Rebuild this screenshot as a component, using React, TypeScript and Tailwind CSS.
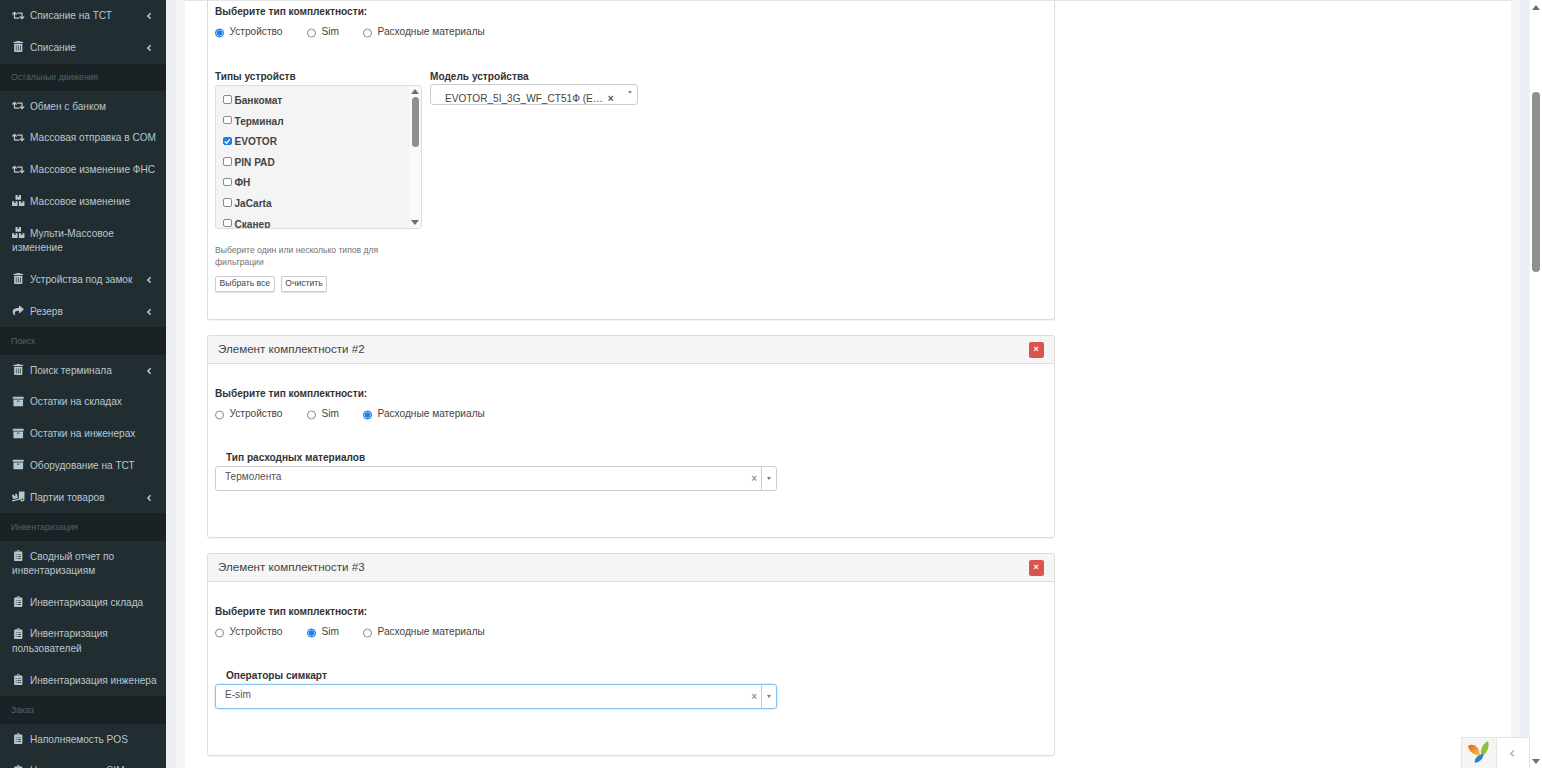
import React from "react";
import {
  FaAngleLeft,
  FaArchive,
  FaBoxes,
  FaClipboardList,
  FaRetweet,
  FaShare,
  FaTrashAlt,
  FaTruckLoading,
} from "react-icons/fa";
import type { IconType } from "react-icons";

type NavRow =
  | { heading: string }
  | { icon: IconType; label: string; arrow?: boolean; tall?: boolean };

const navRows: NavRow[] = [
  { icon: FaRetweet, label: "Списание на ТСТ", arrow: true },
  { icon: FaTrashAlt, label: "Списание", arrow: true },
  { heading: "Остальные движения" },
  { icon: FaRetweet, label: "Обмен с банком" },
  { icon: FaRetweet, label: "Массовая отправка в COM" },
  { icon: FaRetweet, label: "Массовое изменение ФНС" },
  { icon: FaBoxes, label: "Массовое изменение" },
  { icon: FaBoxes, label: "Мульти-Массовое изменение", tall: true },
  { icon: FaTrashAlt, label: "Устройства под замок", arrow: true },
  { icon: FaShare, label: "Резерв", arrow: true },
  { heading: "Поиск" },
  { icon: FaTrashAlt, label: "Поиск терминала", arrow: true },
  { icon: FaArchive, label: "Остатки на складах" },
  { icon: FaArchive, label: "Остатки на инженерах" },
  { icon: FaArchive, label: "Оборудование на ТСТ" },
  { icon: FaTruckLoading, label: "Партии товаров", arrow: true },
  { heading: "Инвентаризация" },
  { icon: FaClipboardList, label: "Сводный отчет по инвентаризациям", tall: true },
  { icon: FaClipboardList, label: "Инвентаризация склада" },
  { icon: FaClipboardList, label: "Инвентаризация пользователей", tall: true },
  { icon: FaClipboardList, label: "Инвентаризация инженера" },
  { heading: "Заказ" },
  { icon: FaClipboardList, label: "Наполняемость POS" },
  { icon: FaClipboardList, label: "Наполняемость SIM" },
];

const deviceTypes = ["Банкомат", "Терминал", "EVOTOR", "PIN PAD", "ФН", "JaCarta", "Сканер"];

const Sidebar = () => (
  <aside className="w-[166px] shrink-0 overflow-hidden bg-[#222d32] text-[10.1px] leading-[14.45px] text-[#b8c7ce]">
    {navRows.map((row) =>
      "heading" in row ? (
        <div
          key={row.heading}
          className="flex h-[27.2px] items-center bg-[#1a2226] pl-[11px] text-[8.7px] text-[#4b646f]"
        >
          {row.heading}
        </div>
      ) : (
        <div
          key={row.label}
          className={`relative pl-[12px] pr-[3.5px] pt-[9px] ${row.tall ? "h-[46.2px]" : "h-[31.75px]"}`}
        >
          <span className="mr-[5.5px] inline-flex w-[12.5px] justify-center align-[-1.5px]">
            <row.icon className="h-[11px] w-[12.5px]" />
          </span>
          <span>{row.label}</span>
          {row.arrow && <FaAngleLeft className="absolute right-[13.5px] top-[11px] h-[10px] w-[8px]" />}
        </div>
      )
    )}
  </aside>
);

const TypeRadios = ({ value, group }: { value: string; group: string }) => (
  <div className="mt-[4.6px] flex h-[14.4px] items-center text-[10.15px] text-[#444]">
    {[
      { label: "Устройство", width: "w-[92px]" },
      { label: "Sim", width: "w-[56px]" },
      { label: "Расходные материалы", width: "w-auto" },
    ].map((opt) => (
      <label key={opt.label} className={`flex items-center ${opt.width}`}>
        <input
          type="radio"
          name={group}
          defaultChecked={opt.label === value}
          className="m-0 mr-[5.5px] h-[9px] w-[9px] translate-y-[1.5px] appearance-none rounded-full border border-[#8a8a8a] bg-white checked:border-[#1a7fe8] checked:bg-[#1a7fe8] checked:shadow-[inset_0_0_0_0.8px_#dcebfb]"
        />
        {opt.label}
      </label>
    ))}
  </div>
);

const GroupLabel = () => (
  <div className="h-[14.4px] text-[10.1px] font-bold leading-[14.4px] text-[#333]">Выберите тип комплектности:</div>
);

const DeviceCheck = ({ name }: { name: string }) => {
  const checked = name === "EVOTOR";
  return (
    <label className="flex h-[20.6px] items-center text-[10.1px] font-bold text-[#444]">
      <span className="relative mr-[3px] flex h-[8.5px] w-[8.5px] -translate-y-[1px]">
        <input
          type="checkbox"
          defaultChecked={checked}
          className="m-0 h-full w-full appearance-none rounded-[2px] border border-[#8a8a8a] bg-white checked:border-[#1a7fe8] checked:bg-[#1a7fe8]"
        />
        {checked && (
          <svg viewBox="0 0 10 10" className="absolute inset-0 h-full w-full">
            <path d="M2 5.2 4.2 7.4 8 2.8" fill="none" stroke="white" strokeWidth="1.6" />
          </svg>
        )}
      </span>
      {name}
    </label>
  );
};

const DeviceList = () => (
  <div className="flex h-[144px] overflow-hidden rounded-[3px] border border-[#ddd] bg-[#f4f4f4]">
    <div className="flex-1 overflow-hidden pl-[7px] pt-[4.2px]">
      {deviceTypes.map((name) => (
        <DeviceCheck key={name} name={name} />
      ))}
    </div>
    <div className="flex w-[12px] flex-col items-center bg-[#f9f9f9] pt-[3px]">
      <div className="h-0 w-0 border-x-[4px] border-b-[5px] border-x-transparent border-b-[#6e6e6e]" />
      <div className="mt-[3px] h-[50px] w-[7px] rounded-full bg-[#8f8f8f]" />
      <div className="mt-auto mb-[3px] h-0 w-0 border-x-[4px] border-t-[5px] border-x-transparent border-t-[#6e6e6e]" />
    </div>
  </div>
);

const SmallButton = ({ children }: { children: React.ReactNode }) => (
  <button className="h-[16px] rounded-[2px] border border-[#ccc] bg-white px-[3.6px] text-[8.6px] leading-none text-[#444] shadow-[0_1px_0_#e5e5e5]">
    {children}
  </button>
);

const ClearableSelect = ({ value, focused }: { value: string; focused?: boolean }) => (
  <div
    className={`flex h-[25px] w-[562px] items-center rounded-[3px] border text-[10.1px] text-[#555] ${
      focused ? "border-[#85c1f5] shadow-[0_0_2px_#9ecdf5]" : "border-[#ccc]"
    }`}
  >
    <span className="flex-1 -translate-y-[2px] pl-[9px]">{value}</span>
    <span className="pr-[4px] text-[10px] font-bold text-[#999]">×</span>
    <span className="flex h-full w-[15px] items-center justify-center border-l border-[#ccc]">
      <span className="h-0 w-0 border-x-[2.5px] border-t-[3px] border-x-transparent border-t-[#777]" />
    </span>
  </div>
);

const ItemPanel = ({
  num,
  radio,
  label,
  value,
  focused,
  group,
}: {
  num: number;
  radio: string;
  label: string;
  value: string;
  focused?: boolean;
  group: string;
}) => (
  <section className="mt-[15px] h-[203px] rounded-[3px] border border-[#ddd] bg-white shadow-[0_1px_1px_rgba(0,0,0,0.05)]">
    <header className="flex h-[28px] items-center justify-between border-b border-[#ddd] bg-[#f5f5f5] pl-[10px] pr-[10px]">
      <span className="-translate-y-[1px] text-[11.6px] text-[#444]">Элемент комплектности #{num}</span>
      <button className="flex h-[16px] w-[14.5px] items-center justify-center rounded-[2px] bg-[#d9534f] text-[9px] font-bold leading-none text-white">
        ×
      </button>
    </header>
    <div className="pl-[7px] pt-[23px]">
      <GroupLabel />
      <TypeRadios value={radio} group={group} />
      <div className="mt-[30.4px] h-[14.4px] pl-[11px] text-[10.1px] font-bold leading-[14.4px] text-[#333]">{label}</div>
      <div className="mt-[0.8px]">
        <ClearableSelect value={value} focused={focused} />
      </div>
    </div>
  </section>
);

const FirstPanel = () => (
  <section className="h-[319px] rounded-b-[3px] border border-t-0 border-[#ddd] bg-white pl-[7px] pt-[4px] shadow-[0_1px_1px_rgba(0,0,0,0.05)]">
    <GroupLabel />
    <TypeRadios value="Устройство" group="item1" />
    <div className="mt-[31.6px] flex gap-[8px]">
      <div className="w-[207px]">
        <div className="h-[14.4px] text-[10.1px] font-bold leading-[14.4px] text-[#333]">Типы устройств</div>
        <div className="mt-[0.8px]">
          <DeviceList />
        </div>
        <p className="mt-[14.6px] w-[190px] text-[8.6px] leading-[12.4px] text-[#737373]">
          Выберите один или несколько типов для фильтрации
        </p>
        <div className="mt-[7px] flex gap-[6px]">
          <SmallButton>Выбрать все</SmallButton>
          <SmallButton>Очистить</SmallButton>
        </div>
      </div>
      <div className="w-[208px]">
        <div className="h-[14.4px] text-[10.1px] font-bold leading-[14.4px] text-[#333]">Модель устройства</div>
        <div className="relative flex h-[21px] items-end overflow-hidden rounded-[3px] border border-[#ccc] pl-[14px] text-[10.1px] leading-[14px] text-[#444]">
          <span className="translate-y-[1.5px]">EVOTOR_5I_3G_WF_CT51Ф (E…</span>
          <span className="ml-[5px] translate-y-[1.5px] font-bold text-[#555]">×</span>
          <span className="absolute right-[5px] top-[6px] h-0 w-0 border-x-[2.5px] border-t-[3px] border-x-transparent border-t-[#888]" />
        </div>
      </div>
    </div>
  </section>
);

const PageScrollbar = () => (
  <div className="flex w-[12px] shrink-0 flex-col items-center bg-white pt-[5px]">
    <div className="h-0 w-0 border-x-[4px] border-b-[5px] border-x-transparent border-b-[#6e6e6e]" />
    <div className="mt-[82px] h-[180px] w-[8px] rounded-full bg-[#8f8f8f]" />
    <div className="mt-auto mb-[4px] h-0 w-0 border-x-[4px] border-t-[5px] border-x-transparent border-t-[#6e6e6e]" />
  </div>
);

const DebugToolbar = () => (
  <div className="absolute bottom-0 right-[12px] flex h-[31px] w-[69px] border border-b-0 border-[#e4e4e4]">
    <div className="flex w-[34px] items-center justify-center bg-[#f5f5f5]">
      <svg viewBox="0 0 24 24" className="h-[24px] w-[24px]">
        <defs>
          <linearGradient id="yiiOrange" x1="0" y1="0" x2="1" y2="1">
            <stop offset="0" stopColor="#e8622c" />
            <stop offset="1" stopColor="#f5c33b" />
          </linearGradient>
        </defs>
        <path d="M1 5C5 2 12 4 13 14 8 15 2 11 1 5z" fill="url(#yiiOrange)" />
        <path d="M21 0c2 5-1 12-6 16C12 11 15 3 21 0z" fill="#8ebf3f" />
        <path d="M16 13c1 4-3 8-8 9-1-4 2-8 8-9z" fill="#2b7fc9" />
      </svg>
    </div>
    <div className="flex flex-1 items-center justify-center border-l border-[#e4e4e4] bg-white pr-[2px] text-[#bbb]">
      <FaAngleLeft className="h-[11px] w-[8px]" />
    </div>
  </div>
);

export default function App() {
  return (
    <div className="relative flex h-screen w-full overflow-hidden bg-white font-['Liberation_Sans',Arial,sans-serif]">
      <Sidebar />
      <main className="flex min-w-0 flex-1 overflow-hidden bg-[#ecf0f5] pl-[10px] pr-[10px]">
        <div className="flex-1 bg-[#f4f4f4] px-[9px]">
          <div className="h-full border-t border-[#e4e4e4] bg-white pl-[22px]">
            <div className="w-[847.5px]">
              <FirstPanel />
              <ItemPanel num={2} radio="Расходные материалы" label="Тип расходных материалов" value="Термолента" group="item2" />
              <ItemPanel num={3} radio="Sim" label="Операторы симкарт" value="E-sim" focused group="item3" />
            </div>
          </div>
        </div>
      </main>
      <PageScrollbar />
      <DebugToolbar />
    </div>
  );
}
